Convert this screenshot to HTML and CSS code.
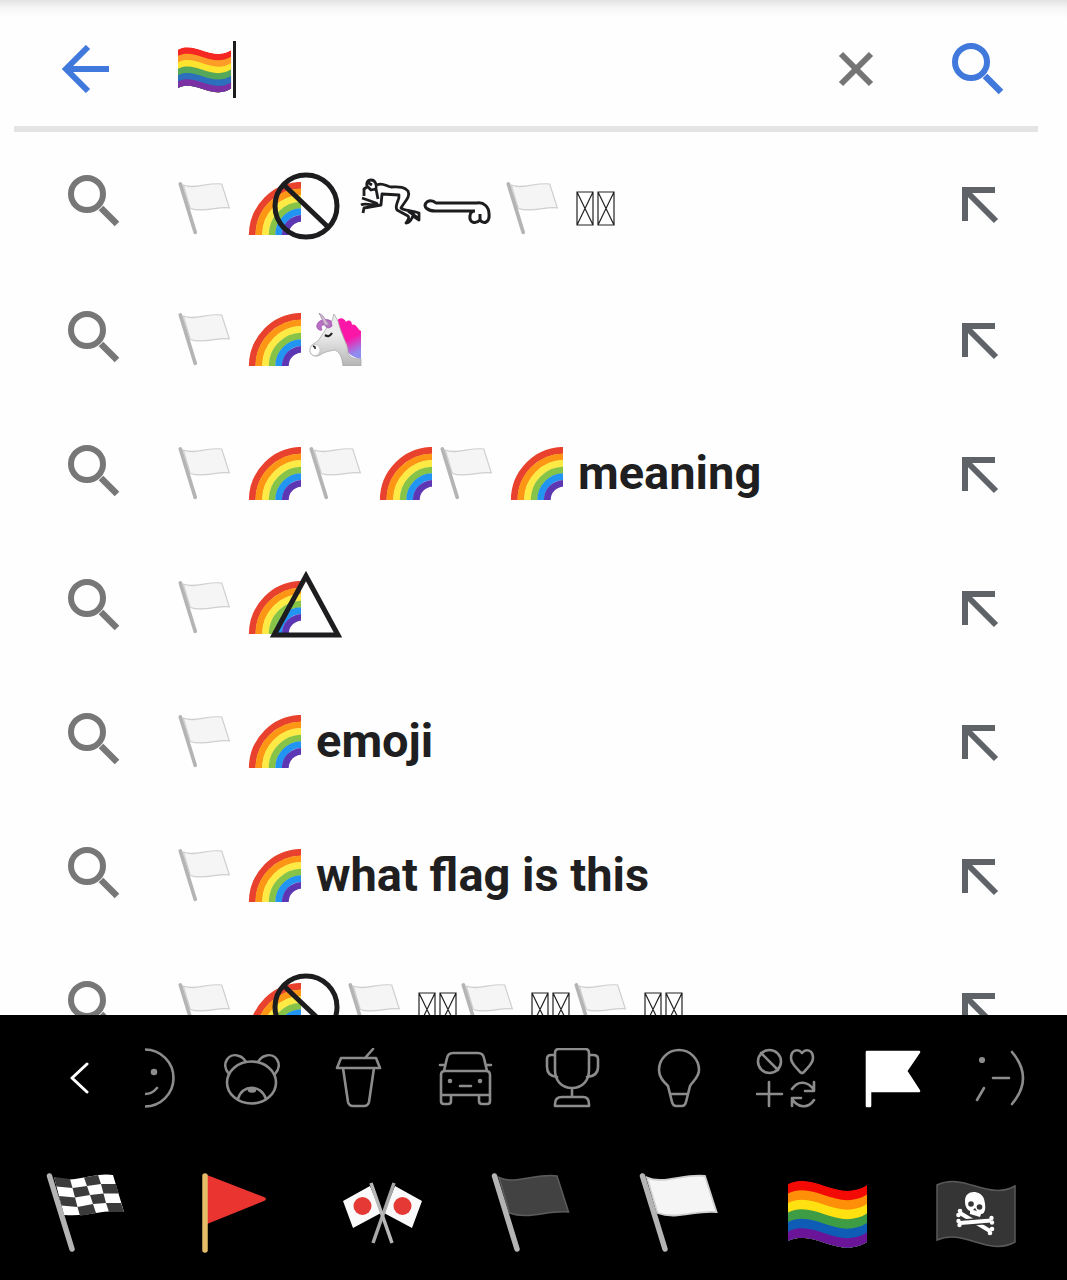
FILE: index.html
```
<!DOCTYPE html>
<html lang="en">

<head>
    <meta charset="UTF-8">
    <meta name="viewport" content="width=device-width, initial-scale=1.0">
    <title>Search</title>
    <link rel="stylesheet" href="styles.css">
</head>

<body>
    <!-- shared shapes -->
    <svg class="defs" aria-hidden="true">
        <defs>
            <linearGradient id="neck" x1="0" y1="0" x2="0" y2="1">
                <stop offset="0.4" stop-color="#ececec" />
                <stop offset="1" stop-color="#b5b5b5" />
            </linearGradient>
            <linearGradient id="mane" x1="0" y1="0" x2="0.3" y2="1">
                <stop offset="0.6" stop-color="#fb16a8" />
                <stop offset="1" stop-color="#8f8cf0" />
            </linearGradient>
            <path id="wave" d="M0 11C26 -2 50 30 79 12V69C50 87 26 55 0 68Z" />
            <clipPath id="wave-clip">
                <use href="#wave" />
            </clipPath>
            <g id="magnifier" fill="none" stroke="currentColor">
                <circle cx="21" cy="20" r="16" stroke-width="6" />
                <path d="M35 34L51 50" stroke-width="6.500" />
            </g>
            <g id="insert" fill="none" stroke="currentColor" stroke-width="6">
                <path d="M4 35V4H34M4 4L35 35" />
            </g>
            <g id="white-flag">
                <path d="M8 4.500C24 12 46 0 66 3L77.500 39C56 37 38 47 18.500 40Z" fill="#f5f5f5" stroke="#cfcfcf" stroke-width="1.800" />
                <path d="M3.500 3L26 76" stroke="#b4b4b4" stroke-width="5.500" stroke-linecap="round" />
            </g>
            <g id="rainbow-flag" clip-path="url(#wave-clip)">
                <use href="#wave" fill="#f30a05" />
                <use href="#wave" y="9.5" fill="#fd8f09" />
                <use href="#wave" y="19" fill="#ffe112" />
                <use href="#wave" y="28.5" fill="#3e9c44" />
                <use href="#wave" y="38" fill="#0e5cb5" />
                <use href="#wave" y="47.5" fill="#6a1597" />
            </g>
            <g id="rainbow" fill="none" stroke-width="6.8">
                <circle cx="54" cy="53" r="49.7" stroke="#e8422f" />
                <circle cx="54" cy="53" r="43.1" stroke="#fc9614" />
                <circle cx="54" cy="53" r="36.5" stroke="#fdea45" />
                <circle cx="54" cy="53" r="29.900" stroke="#87c346" />
                <circle cx="54" cy="53" r="23.300" stroke="#2294f2" />
                <circle cx="54" cy="53" r="16.700" stroke="#5d36b3" />
            </g>
            <g id="prohibited" fill="none" stroke="#1d1d1f" stroke-width="5">
                <circle cx="34" cy="34" r="31" />
                <path d="M12 13L56 55" />
            </g>
            <g id="missing" fill="none" stroke="#222" stroke-width="1.200">
                <path d="M1 1H17V34H1ZL17 34M17 1L1 34M22 1H38V34H22ZL38 34M38 1L22 34" />
            </g>
        </defs>
    </svg>

    <main class="search-page">
        <form class="search-bar">
            <button type="button" class="icon-button" aria-label="Back">
                <svg class="back-icon" viewBox="0 0 48 48"><path d="M47 24H4M26 2L4 24L26 46" fill="none" stroke="currentColor" stroke-width="6" /></svg>
            </button>
            <label class="query">
                <svg class="query-flag" viewBox="0 0 80 80" role="img" aria-label="Rainbow flag"><use href="#rainbow-flag" /></svg>
                <span class="caret"></span>
                <input type="text" class="query-input" aria-label="Search" autocomplete="off">
            </label>
            <button type="reset" class="icon-button clear-button" aria-label="Clear">
                <svg class="clear-icon" viewBox="0 0 36 36"><path d="M3 3L33 33M33 3L3 33" fill="none" stroke="currentColor" stroke-width="6" /></svg>
            </button>
            <button type="submit" class="icon-button" aria-label="Search">
                <svg class="submit-icon" viewBox="0 0 54 54"><use href="#magnifier" /></svg>
            </button>
        </form>

        <ul class="suggestions">
            <li class="suggestion">
                <a href="#" class="suggestion-link">
                    <svg class="row-search" viewBox="0 0 54 58"><use href="#magnifier" /></svg>
                    <span class="phrase">
                        <svg class="flag" viewBox="0 0 80 80"><use href="#white-flag" /></svg>
                        <svg class="emoji" viewBox="0 0 53 53"><use href="#rainbow" /></svg>
                        <svg class="prohibited spaced" viewBox="0 0 68 72"><use href="#prohibited" /></svg>
                        <svg class="glyph" viewBox="0 0 65 60" fill="none" stroke="#1d1d1f" stroke-width="2.800" stroke-linejoin="round">
                            <path d="M19 7C24 4 28 8 33 9C40 9 46 8 50 13C53 19 46 24 43 30C46 33 54 32 61 35V42L55 38C53 41 53 45 48 45C50 42 52 40 50 38L39 32C36 27 42 22 41 17L24 16L23 27L6 30L5 35" />
                            <path d="M18 11C19 6 17 2 13 2C9 2 8 6 9 9L6 11V18M9 8L13 12L18 11L20 21M4 20L18 25M3 27C8 24 13 29 20 25M9 4L14 7M50 33L60 40M52 34L57 35" />
                        </svg>
                        <svg class="glyph-wide" viewBox="0 0 70 60" fill="none" stroke="#1d1d1f" stroke-width="3" stroke-linejoin="round">
                            <path d="M52 33H12C5 33 0 29 3 25C5 22 10 22 13 25H54C61 24 66 29 66 36C67 44 61 47 57 42C52 47 46 44 47 38C47 35 49 33 52 33M57 42V36" />
                        </svg>
                        <svg class="flag" viewBox="0 0 80 80"><use href="#white-flag" /></svg>
                        <svg class="missing" viewBox="0 0 39 35"><use href="#missing" /></svg>
                    </span>
                </a>
                <button type="button" class="icon-button insert-button" aria-label="Insert suggestion"><svg class="insert-icon" viewBox="0 -4 38 42"><use href="#insert" /></svg></button>
            </li>
            <li class="suggestion">
                <a href="#" class="suggestion-link">
                    <svg class="row-search" viewBox="0 0 54 58"><use href="#magnifier" /></svg>
                    <span class="phrase">
                        <svg class="flag" viewBox="0 0 80 80"><use href="#white-flag" /></svg>
                        <svg class="emoji" viewBox="0 0 53 53"><use href="#rainbow" /></svg>
                        <svg class="emoji" viewBox="0 0 53 53">
                            <path d="M28 8C31 3 36 6 37 9C40 6 43 8 43 12C47 10 48 16 52 18V46C42 44 37 40 38 32C31 25 31 16 28 8Z" fill="url(#mane)" />
                            <path d="M17 16C19 10 21 9 23 8L25 1L29 8C32 22 40 33 39 40C41 45 46 46 52 46V53H34C33 46 32 40 26 37C20 38 15 39 11 42C6 45 0 42 1 36C2 31 6 30 9 28Z" fill="url(#neck)" stroke="#aaa" stroke-width="0.800" />
                            <ellipse cx="6" cy="37" rx="5" ry="5.5" fill="#fff" stroke="#bbb" stroke-width="0.600" />
                            <path d="M22 8C17 5 9 7 8 12C7 15 10 18 13 17C11 14 13 11 16 12C17 15 20 16 23 13Z" fill="#b96fc4" stroke="#a04db0" stroke-width="0.800" />
                            <path d="M10 0L14 3L20 12L16 12L13 6Z" fill="#d8b9d8" stroke="#9c8ba3" stroke-width="0.800" />
                            <path d="M16 22Q20 25 23 20" fill="none" stroke="#222" stroke-width="2.200" />
                            <path d="M4 33L6 34L6 36" fill="none" stroke="#222" stroke-width="1.500" />
                        </svg>
                    </span>
                </a>
                <button type="button" class="icon-button insert-button" aria-label="Insert suggestion"><svg class="insert-icon" viewBox="0 -4 38 42"><use href="#insert" /></svg></button>
            </li>
            <li class="suggestion">
                <a href="#" class="suggestion-link">
                    <svg class="row-search" viewBox="0 0 54 58"><use href="#magnifier" /></svg>
                    <span class="phrase">
                        <svg class="flag" viewBox="0 0 80 80"><use href="#white-flag" /></svg>
                        <svg class="emoji" viewBox="0 0 53 53"><use href="#rainbow" /></svg>
                        <svg class="flag" viewBox="0 0 80 80"><use href="#white-flag" /></svg>
                        <svg class="emoji" viewBox="0 0 53 53"><use href="#rainbow" /></svg>
                        <svg class="flag" viewBox="0 0 80 80"><use href="#white-flag" /></svg>
                        <svg class="emoji" viewBox="0 0 53 53"><use href="#rainbow" /></svg>
                        <span class="words">meaning</span>
                    </span>
                </a>
                <button type="button" class="icon-button insert-button" aria-label="Insert suggestion"><svg class="insert-icon" viewBox="0 -4 38 42"><use href="#insert" /></svg></button>
            </li>
            <li class="suggestion">
                <a href="#" class="suggestion-link">
                    <svg class="row-search" viewBox="0 0 54 58"><use href="#magnifier" /></svg>
                    <span class="phrase">
                        <svg class="flag" viewBox="0 0 80 80"><use href="#white-flag" /></svg>
                        <svg class="emoji" viewBox="0 0 53 53"><use href="#rainbow" /></svg>
                        <svg class="triangle" viewBox="0 0 74 76"><path d="M37 7L5 66H69Z" fill="none" stroke="#1d1d1f" stroke-width="5" /></svg>
                    </span>
                </a>
                <button type="button" class="icon-button insert-button" aria-label="Insert suggestion"><svg class="insert-icon" viewBox="0 -4 38 42"><use href="#insert" /></svg></button>
            </li>
            <li class="suggestion">
                <a href="#" class="suggestion-link">
                    <svg class="row-search" viewBox="0 0 54 58"><use href="#magnifier" /></svg>
                    <span class="phrase">
                        <svg class="flag" viewBox="0 0 80 80"><use href="#white-flag" /></svg>
                        <svg class="emoji" viewBox="0 0 53 53"><use href="#rainbow" /></svg>
                        <span class="words">emoji</span>
                    </span>
                </a>
                <button type="button" class="icon-button insert-button" aria-label="Insert suggestion"><svg class="insert-icon" viewBox="0 -4 38 42"><use href="#insert" /></svg></button>
            </li>
            <li class="suggestion">
                <a href="#" class="suggestion-link">
                    <svg class="row-search" viewBox="0 0 54 58"><use href="#magnifier" /></svg>
                    <span class="phrase">
                        <svg class="flag" viewBox="0 0 80 80"><use href="#white-flag" /></svg>
                        <svg class="emoji" viewBox="0 0 53 53"><use href="#rainbow" /></svg>
                        <span class="words">what flag is this</span>
                    </span>
                </a>
                <button type="button" class="icon-button insert-button" aria-label="Insert suggestion"><svg class="insert-icon" viewBox="0 -4 38 42"><use href="#insert" /></svg></button>
            </li>
            <li class="suggestion">
                <a href="#" class="suggestion-link">
                    <svg class="row-search" viewBox="0 0 54 58"><use href="#magnifier" /></svg>
                    <span class="phrase">
                        <svg class="flag" viewBox="0 0 80 80"><use href="#white-flag" /></svg>
                        <svg class="emoji" viewBox="0 0 53 53"><use href="#rainbow" /></svg>
                        <svg class="prohibited" viewBox="0 0 68 72"><use href="#prohibited" /></svg>
                        <svg class="flag" viewBox="0 0 80 80"><use href="#white-flag" /></svg>
                        <svg class="missing" viewBox="0 0 39 35"><use href="#missing" /></svg>
                        <svg class="flag" viewBox="0 0 80 80"><use href="#white-flag" /></svg>
                        <svg class="missing" viewBox="0 0 39 35"><use href="#missing" /></svg>
                        <svg class="flag" viewBox="0 0 80 80"><use href="#white-flag" /></svg>
                        <svg class="missing" viewBox="0 0 39 35"><use href="#missing" /></svg>
                    </span>
                </a>
                <button type="button" class="icon-button insert-button" aria-label="Insert suggestion"><svg class="insert-icon" viewBox="0 -4 38 42"><use href="#insert" /></svg></button>
            </li>
        </ul>
    </main>

    <section class="keyboard">
        <div class="tab-bar">
            <button type="button" class="icon-button tabs-back" aria-label="Keyboard">
                <svg class="chevron" viewBox="0 0 20 32"><path d="M17 2L2 16L17 30" fill="none" stroke="currentColor" stroke-width="3" stroke-linecap="round" stroke-linejoin="round" /></svg>
            </button>
            <nav class="tabs">
                <button type="button" class="tab tab-cut" aria-label="Smileys">
                    <svg class="half-icon" viewBox="30 0 30 60"><circle cx="30" cy="30" r="28.500" /><circle class="solid" cx="39" cy="24" r="2" /><path d="M30 46Q37 46 42 40" /></svg>
                </button>
                <button type="button" class="tab" aria-label="Animals">
                    <svg class="tab-icon" viewBox="1 0 60 60"><ellipse cx="30.500" cy="34.500" rx="24.500" ry="21" /><path d="M8 26C-1 16 8 4 18 8Q22 9 25 14M37 14Q40 9 44 8C54 4 63 16 54 26M17 51C21 36 40 36 45 51" /><ellipse class="solid" cx="31" cy="42" rx="3" ry="1.500" /></svg>
                </button>
                <button type="button" class="tab" aria-label="Food">
                    <svg class="tab-icon" viewBox="1 0 60 60"><path d="M13 10H48L52 20H9ZM37 10L45 1M15 20L20 54Q21 58 25 58H36Q40 58 41 54L46 20" /></svg>
                </button>
                <button type="button" class="tab" aria-label="Travel">
                    <svg class="tab-icon" viewBox="0 0 60 60"><path d="M9 23L12 10Q13 5 18 5H43Q48 5 49 10L52 23M5 17H10M51 17H56M6 47V27Q6 23 10 23H51Q55 23 55 27V47ZM6 47V53Q6 56 9 56H13Q16 56 16 53V47M44 47V53Q44 56 47 56H52Q55 56 55 53V47M25 38H36" /><circle class="solid" cx="15" cy="33" r="1" /><circle class="solid" cx="45" cy="33" r="1" /></svg>
                </button>
                <button type="button" class="tab" aria-label="Activities">
                    <svg class="tab-icon" viewBox="0 0 60 60"><path d="M13 5Q13 1 17 1H43Q47 1 47 5V22C47 33 40 40 30 40C20 40 13 33 13 22ZM13 7H9Q5 7 5 11V19Q5 28 15 29M47 7H51Q56 7 56 11V19Q56 28 45 29M30 40V49M13 58V56Q13 49 20 49H41Q47 49 47 56V58Z" /></svg>
                </button>
                <button type="button" class="tab" aria-label="Objects">
                    <svg class="tab-icon" viewBox="0 0 60 60"><path d="M19 38C14 33 10 29 10 22C10 11 19 2 30 2C41 2 50 11 50 22C50 29 44 33 41 38L37 54Q36 58 33 58H27Q24 58 23 54ZM21 46H39" /></svg>
                </button>
                <button type="button" class="tab" aria-label="Symbols">
                    <svg class="tab-icon" viewBox="0 0 60 60"><circle cx="13.500" cy="13.500" r="11.500" /><path d="M5 5L22 22M46 5C42 0 35 2 35 10C35 16 41 20 44 24Q46 26 48 24C51 20 57 16 57 10C57 2 50 0 46 5ZM1 46H26M13 34V58M36 41C42 32 52 33 58 42M58 34V43H49M58 52C52 61 42 60 36 51M36 58V50H45" /></svg>
                </button>
                <button type="button" class="tab tab-active" aria-label="Flags" aria-pressed="true">
                    <svg class="tab-icon" viewBox="1 0 60 60"><path class="solid" d="M5 4H57L44 23L57 43H8V58H5Z" /></svg>
                </button>
                <button type="button" class="tab" aria-label="Emoticons">
                    <svg class="tab-icon" viewBox="0 0 60 60"><circle class="solid" cx="12" cy="12" r="1.800" /><path d="M14 40L7 52M23 30H39M42 4Q64 30 42 56" /></svg>
                </button>
            </nav>
        </div>
        <div class="emoji-row">
            <button type="button" class="emoji-key" aria-label="Chequered flag">
                <svg class="key-icon" viewBox="0 0 80 80">
                    <path d="M8 4Q18 9 38 4.500T67 2L78 39Q64 37 50 40T18 42Z" fill="#fff" />
                    <path d="M8 4L24 6L26.500 15L10.500 13.500ZM38 4.500L52 2L55 11L41 13ZM26.500 15L41 13L44 22L29 24.500ZM55 11L70 11L72.500 20.500L57.500 20.500ZM13 23L29 24.500L31.500 34L15.500 32.500ZM44 22L57.500 20.500L60 30L47 31ZM31.500 34L47 31L50 40L34 43ZM60 30L75 30L78 39L63 39Z" fill="#3b3b3b" />
                    <path d="M3.500 3L26 76" stroke="#b4b4b4" stroke-width="5.500" stroke-linecap="round" />
                </svg>
            </button>
            <button type="button" class="emoji-key" aria-label="Triangular flag">
                <svg class="key-icon" viewBox="0 0 80 80">
                    <path d="M13 2L70 24Q74 26 70 28L13 51Z" fill="#e93430" />
                    <path d="M11 3V77" stroke="#e5bd69" stroke-width="5.500" stroke-linecap="round" />
                </svg>
            </button>
            <button type="button" class="emoji-key" aria-label="Crossed flags">
                <svg class="key-icon" viewBox="0 0 80 80">
                    <path d="M27 13L0 28L10 55L38 40ZM52 13L79 28L69 55L41 40Z" fill="#fafafa" />
                    <circle cx="19.500" cy="33" r="9" fill="#e53935" />
                    <circle cx="59.500" cy="33" r="9" fill="#e53935" />
                    <path d="M51 10L30 70" stroke="#a8a8a8" stroke-width="3.500" />
                    <path d="M28 10L49 70" stroke="#b8b8b8" stroke-width="3.500" />
                </svg>
            </button>
            <button type="button" class="emoji-key" aria-label="Black flag">
                <svg class="key-icon" viewBox="0 0 80 80">
                    <path d="M8 4.500C24 12 46 0 66 3L77.500 39C56 37 38 47 18.500 40Z" fill="#424242" stroke="#5c5c5c" stroke-width="1.500" />
                    <path d="M3.500 3L26 76" stroke="#b4b4b4" stroke-width="5.500" stroke-linecap="round" />
                </svg>
            </button>
            <button type="button" class="emoji-key" aria-label="White flag">
                <svg class="key-icon" viewBox="0 0 80 80"><use href="#white-flag" /></svg>
            </button>
            <button type="button" class="emoji-key" aria-label="Rainbow flag">
                <svg class="key-icon" viewBox="0 0 80 80"><use href="#rainbow-flag" /></svg>
            </button>
            <button type="button" class="emoji-key" aria-label="Pirate flag">
                <svg class="key-icon" viewBox="0 0 80 80">
                    <path d="M1 12C28 -1 52 28 79 13V69C52 84 28 55 1 67Z" fill="#353535" stroke="#5a5a5a" stroke-width="1.500" />
                    <g stroke="#fff" stroke-width="4" fill="#fff">
                        <path d="M24 40L54 58" />
                        <path d="M24 50L55 47.500" stroke="#353535" stroke-width="7" />
                        <path d="M24 50L55 47.500" />
                    </g>
                    <g fill="#fff">
                        <circle cx="24" cy="38" r="2.300" /><circle cx="22.500" cy="42" r="2.300" />
                        <circle cx="56" cy="56" r="2.300" /><circle cx="54" cy="60" r="2.300" />
                        <circle cx="22.500" cy="48" r="2.200" /><circle cx="23.500" cy="52" r="2.200" />
                        <circle cx="55.500" cy="45" r="2.200" /><circle cx="56" cy="49.500" r="2.200" />
                        <path d="M29 28C29 16 45 17 48 26C50 33 50 41 45 41L44 44L34 41V38C30 36 29 32 29 28Z" />
                    </g>
                    <g fill="#353535">
                        <circle cx="35" cy="31" r="2.800" /><circle cx="43.500" cy="34" r="2.800" />
                        <path d="M39 35L41 38L37 37Z" />
                    </g>
                </svg>
            </button>
        </div>
    </section>
</body>

</html>
```
FILE: styles.css
```
* {
    margin: 0;
    padding: 0;
    box-sizing: border-box;
}

body {
    font-family: Roboto, "Liberation Sans", sans-serif;
    background: #fefefe;
    color: #1f1f21;
    height: 100vh;
    display: flex;
    flex-direction: column;
    overflow: hidden;
}

svg {
    display: block;
    flex-shrink: 0;
}

.defs {
    position: absolute;
    width: 0;
    height: 0;
}

.search-page {
    flex: 1;
    min-height: 0;
    overflow: hidden;
    background: linear-gradient(#e2e2e2, #f6f6f6 8px, #fefefe 18px);
}

.icon-button {
    border: none;
    background: none;
    color: inherit;
    cursor: pointer;
}

/* search bar */
.search-bar {
    height: 132px;
    margin: 0 29px 0 14px;
    padding: 12px 34px 0 48px;
    border-bottom: 6px solid #e4e4e4;
    display: flex;
    align-items: center;
    color: #4078dc;
}

.back-icon {
    width: 48px;
    height: 48px;
}

.query {
    flex: 1;
    min-width: 0;
    margin-left: 68px;
    display: flex;
    align-items: center;
}

.query-flag {
    width: 54px;
    height: 54px;
    opacity: 0.88;
}

.caret {
    width: 3px;
    height: 57px;
    margin-left: 1px;
    background: #1d1d1f;
}

.query-input {
    flex: 1;
    min-width: 0;
    height: 57px;
    border: none;
    outline: none;
    background: transparent;
    font: inherit;
    font-size: 47px;
}

.clear-button {
    margin-right: 76px;
    color: #757575;
}

.clear-icon {
    width: 36px;
    height: 36px;
}

.submit-icon {
    width: 54px;
    height: 54px;
}

/* suggestions */
.suggestions {
    list-style: none;
    padding-top: 4px;
}

.suggestion {
    height: 134px;
    padding: 0 68px 0 66px;
    display: flex;
    align-items: center;
}

.suggestion:first-child {
    margin-bottom: 2px;
}

.suggestion-link {
    flex: 1;
    min-width: 0;
    display: flex;
    align-items: center;
    color: inherit;
    text-decoration: none;
}

.row-search {
    width: 54px;
    height: 58px;
    margin-right: 58px;
    color: #777;
}

.phrase {
    display: flex;
    align-items: center;
    white-space: nowrap;
}

.suggestion:first-child .phrase {
    padding-top: 10px;
}

.flag {
    width: 53px;
    height: 53px;
    margin-right: 17px;
}

.emoji {
    width: 53px;
    height: 53px;
    margin-right: 8px;
}

.prohibited {
    width: 68px;
    height: 72px;
    margin: 0 8px 0 -37px;
}

.prohibited.spaced {
    margin-right: 18px;
}

.triangle {
    width: 74px;
    height: 76px;
    margin-left: -40px;
}

.glyph {
    width: 65px;
    height: 60px;
}

.glyph-wide {
    width: 70px;
    height: 60px;
    margin-right: 13px;
}

.missing {
    width: 39px;
    height: 35px;
    margin-right: 4px;
}

.words {
    margin-left: 7px;
    font-size: 47px;
    font-weight: 700;
    line-height: 56px;
}

.insert-button {
    color: #5f6368;
}

.insert-icon {
    width: 38px;
    height: 42px;
}

/* keyboard */
.keyboard {
    background: #000;
    padding-bottom: 27px;
}

.tab-bar {
    height: 126px;
    padding-right: 14px;
    display: flex;
    align-items: center;
}

.tabs-back {
    width: 50px;
    margin: 0 40px 0 55px;
    color: #fff;
}

.chevron {
    width: 20px;
    height: 32px;
    margin: 0 auto;
}

.tabs {
    flex: 1;
    min-width: 0;
    display: grid;
    grid-template-columns: 1fr repeat(8, 2fr);
}

.tab {
    border: none;
    background: none;
    color: #8c8c8c;
    display: flex;
    justify-content: center;
    cursor: pointer;
}

.tab-cut {
    justify-content: flex-start;
}

.tab-active {
    color: #fff;
}

.tab-icon,
.half-icon {
    width: 60px;
    height: 60px;
    fill: none;
    stroke: currentColor;
    stroke-width: 2.6;
    stroke-linecap: round;
    stroke-linejoin: round;
}

.half-icon {
    width: 30px;
}

.tab-icon .solid,
.half-icon .solid {
    fill: currentColor;
}

.emoji-row {
    padding: 32px 17px 0 12px;
    display: grid;
    grid-template-columns: repeat(7, 1fr);
}

.emoji-key {
    border: none;
    background: none;
    display: flex;
    justify-content: center;
    cursor: pointer;
}

.key-icon {
    width: 80px;
    height: 80px;
}
```
